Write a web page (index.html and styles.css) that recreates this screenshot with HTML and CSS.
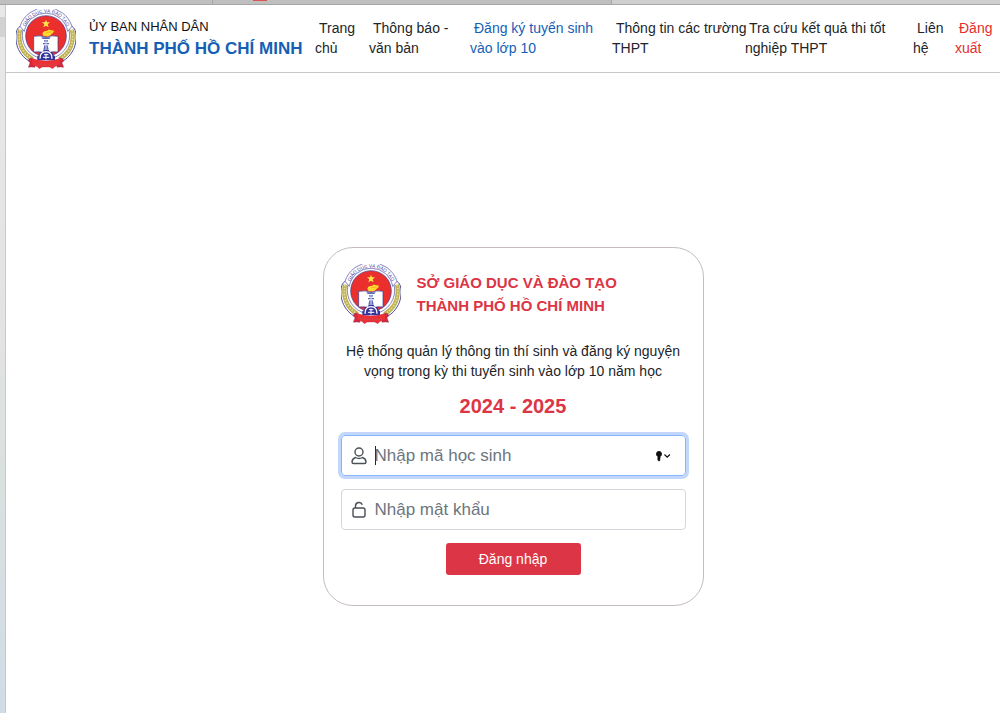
FILE: index.html
```html
<!DOCTYPE html>
<html lang="vi">
<head>
    <meta charset="UTF-8">
    <meta name="viewport" content="width=device-width, initial-scale=1.0">
    <title>Đăng ký tuyển sinh vào lớp 10</title>
    <link rel="stylesheet" href="styles.css">
</head>
<body>

    <div class="tab-strip"><span class="tab"></span><span class="tab tab-marked"></span><span class="tab tab-light"></span></div>

    <div class="window">
        <div class="side-strip"></div>
        <div class="page">
            <header class="header">
                <a class="brand" href="#">
                    <!-- Logo gốc, form bên dưới dùng lại bằng <use> -->
                    <svg class="emblem" viewBox="0 0 180 180" role="img" aria-label="Logo">
                        <g id="emblem">
                            <path d="M22 52 C-6 46 -4 100 8 122 C18 142 34 156 50 160 L130 160 C146 156 162 142 172 122 C184 100 186 46 158 52 Z" fill="#fff" stroke="#4a4aa0" stroke-width="3"/>
                            <path d="M12 62 C4 100 18 132 50 151M168 62 C176 100 162 132 130 151" fill="none" stroke="#bdb04c" stroke-width="13"/>
                            <path d="M12 62 C4 100 18 132 50 151M168 62 C176 100 162 132 130 151" fill="none" stroke="#e6dea0" stroke-width="5" stroke-dasharray="5 4"/>
                            <circle cx="90" cy="79" r="71" fill="#fff" stroke="#4a4aa0" stroke-width="2"/>
                            <path d="M12 52 A82 82 0 0 1 168 52 L155 67 A66 66 0 0 0 25 67 Z" fill="#fff" stroke="#4a4aa0" stroke-width="2"/>
                            <circle cx="90" cy="81" r="61" fill="#ea2f2c" stroke="#3b3b98" stroke-width="2"/>
                            <path id="emblem-arc" d="M24 66 A67 67 0 0 1 156 66" fill="none"/>
                            <text class="emblem-text"><textPath href="#emblem-arc" startOffset="50%">GIÁO DỤC VÀ ĐÀO TẠO</textPath></text>
                            <path d="M90 32l3 8h9l-7 6 3 9-8-5-8 5 3-9-7-6h9z" fill="#ffe74a"/>
                            <path d="M53 82q20-4 37 3q17-7 36-3v47q-19-3-36 4q-17-7-37-4z" fill="#fff" stroke="#35358f" stroke-width="2"/>
                            <path d="M82 80c-6-7 0-14 8-14c5 0 7-3 9-5c2 4 12 2 17 6c-5 0-7 3-3 5c-5-1-7 6-13 8c-6 3-12 2-18 0z" fill="#ffdb2e"/>
                            <path d="M91 72c5-3 10-3 16-3" fill="none" stroke="#f28c28" stroke-width="2"/>
                            <path d="M76 85h28l-4 5H80zM84 93h12l-2 7H86zM81 102h18v4H81zM85 109h10l3 13H82z" fill="#5c68b5"/>
                            <path d="M90 91v30" stroke="#dfe3fa" stroke-width="3"/>
                            <path d="M64 154v-13l6-3 1-9 8 1 4-7h15l4 7 8-1 1 9 6 3v13z" fill="#34349a"/>
                            <path d="M72 149c0-17 10-21 18-21s18 4 18 21" fill="none" stroke="#fff" stroke-width="4"/>
                            <path d="M84 137h13M81 145h19M90 134v17" stroke="#fff" stroke-width="3"/>
                            <path d="M47 147q-10 0-10 9l5 5-5 14q10-2 20 0l2-15zM133 147q10 0 10 9l-5 5 5 14q-10-2-20 0l-2-15z" fill="#d92a35" stroke="#6c2663"/>
                            <path d="M47 148q20 8 43 8t43-8v20q-11 1-17 5l-6 6-9-5H79l-9 5-6-6q-6-4-17-5z" fill="#ed3036" stroke="#a22d51"/>
                            <path d="M58 164q32 7 64 0" fill="none" stroke="#c45050" stroke-width="3" stroke-dasharray="4 2"/>
                        </g>
                    </svg>
                    <span class="brand-text">
                        <span class="brand-top">ỦY BAN NHÂN DÂN</span>
                        <strong class="brand-name">THÀNH PHỐ HỒ CHÍ MINH</strong>
                    </span>
                </a>
                <nav class="menu">
                    <a href="#">Trang<br>chủ</a>
                    <a href="#">Thông báo -<br>văn bản</a>
                    <a class="active" href="#">Đăng ký tuyển sinh<br>vào lớp 10</a>
                    <a href="#">Thông tin các trường<br>THPT</a>
                    <a href="#">Tra cứu kết quả thi tốt<br>nghiệp THPT</a>
                    <a href="#">Liên<br>hệ</a>
                    <a class="logout" href="#">Đăng<br>xuất</a>
                </nav>
            </header>

            <main class="main">
                <form class="login-card">
                    <div class="card-head">
                        <svg class="emblem" viewBox="0 0 180 180" role="img" aria-label="Logo"><use href="#emblem"/></svg>
                        <h1>SỞ GIÁO DỤC VÀ ĐÀO TẠO<br>THÀNH PHỐ HỒ CHÍ MINH</h1>
                    </div>
                    <p class="intro">Hệ thống quản lý thông tin thí sinh và đăng ký nguyện vọng trong kỳ thi tuyển sinh vào lớp 10 năm học</p>
                    <h2>2024 - 2025</h2>

                    <div class="field focused">
                        <label for="studentCode" aria-label="Mã học sinh">
                            <svg class="icon" viewBox="0 0 16 18"><circle cx="8" cy="5" r="4"/><path d="M4.500 10.500C2.300 11.400 1 13 1 15c0 1 .6 1.500 1.500 1.500h11c.9 0 1.500-.5 1.500-1.500 0-2-1.300-3.600-3.500-4.500-2 1.200-5 1.200-7 0z"/></svg>
                        </label>
                        <span class="caret"></span>
                        <input type="text" id="studentCode" placeholder="Nhập mã học sinh">
                        <svg class="key" viewBox="0 0 16 12"><path d="M4 1a3 3 0 0 0-1.500 5.600V10L4 11.500 5.500 10 4.800 9l.7-.8V6.600A3 3 0 0 0 4 1z"/><path class="chevron" d="M9.500 4.500l2.700 2.700 2.700-2.700"/></svg>
                    </div>
                    <div class="field">
                        <label for="password" aria-label="Mật khẩu">
                            <svg class="icon" viewBox="0 0 16 18"><rect x="2" y="7" width="12" height="9" rx="2"/><path d="M4.500 7V5a3.500 3.500 0 0 1 6.800-1.200"/></svg>
                        </label>
                        <input type="password" id="password" placeholder="Nhập mật khẩu">
                    </div>

                    <button class="login-btn" type="submit">Đăng nhập</button>
                </form>
            </main>
        </div>
    </div>

</body>
</html>
```
FILE: styles.css
```css
* {
    box-sizing: border-box;
}
body {
    margin: 0;
    min-height: 100vh;
    display: flex;
    flex-direction: column;
    font-family: "Liberation Sans", Arial, sans-serif;
    font-size: 14px;
    line-height: 20px;
    color: #212529;
    background-color: #fff;
    overflow-x: hidden;
}
a {
    color: inherit;
    text-decoration: none;
}
.tab-strip {
    display: flex;
    height: 5px;
    background-color: #bfbfbf;
    border-bottom: 1px solid #a6a6a6;
}
.tab {
    flex: 212;
    border-right: 1px solid #a6a6a6;
}
.tab-marked {
    flex: 399;
    background: linear-gradient(#d9534f, #d9534f) 40px 0 / 14px 1px no-repeat;
}
.tab-light {
    flex: 389;
    background-color: #cfcfcf;
    border-right: none;
}
.window {
    flex: 1;
    display: flex;
}
.side-strip {
    width: 6px;
    border-right: 1px solid #c9c9c9;
    background: linear-gradient(#e8e8e8 0 12px, #d2d2d0 12px 32px, #e8e8e8 32px, #e3e3e3 45%, #d8e0e0 70%, #d0dce6);
}
.page {
    flex: 1;
    min-width: 0;
}

/* Header */
.header {
    display: flex;
    align-items: center;
    height: 68px;
    padding-left: 10px;
    border-bottom: 1px solid #c8c8c8;
}
.brand {
    flex: none;
    width: 299px;
    display: flex;
    align-items: center;
    gap: 13px;
}
.emblem {
    flex: none;
    width: 60px;
    height: 60px;
}
.emblem-text {
    font-size: 14px;
    fill: #3b3b98;
    text-anchor: middle;
}
.brand-text {
    display: flex;
    flex-direction: column;
    padding-bottom: 2px;
    white-space: nowrap;
    line-height: 22px;
}
.brand-top {
    font-size: 13px;
    color: #111;
}
.brand-name {
    font-size: 17px;
    color: #1560b5;
}
.menu {
    flex: 1;
    display: grid;
    grid-template-columns: 54fr 101fr 142fr 133fr 168fr 42fr 45fr;
    padding-bottom: 2px;
}
.menu a {
    min-width: 0;
    white-space: nowrap;
    text-indent: 4px;
}
.menu .active {
    color: #1560b5;
}
.menu .logout {
    color: #e52d2d;
}

/* Login */
.main {
    display: flex;
    justify-content: center;
    padding: 174px 0 40px 20px;
}
.login-card {
    width: 381px;
    padding: 16px 17px 30px;
    border: 1px solid #c4bcbf;
    border-radius: 30px;
}
.card-head {
    display: flex;
    align-items: center;
    gap: 16px;
}
h1 {
    margin: 0;
    font-size: 15px;
    line-height: 23px;
    color: #dc3545;
}
.intro {
    margin: 17px 0 13px;
    text-align: center;
}
h2 {
    margin: 0 0 17px;
    font-size: 20px;
    line-height: 24px;
    text-align: center;
    color: #dc3545;
}
.field {
    display: flex;
    align-items: center;
    height: 41px;
    margin-bottom: 13px;
    padding: 0 14px 0 9px;
    border: 1px solid #d3d7db;
    border-radius: 4px;
}
.focused {
    border-color: #86b7fe;
    box-shadow: 0 0 0 3px #c3d7fc;
}
.field label {
    display: flex;
    margin-right: 8px;
}
.icon {
    width: 16px;
    height: 18px;
    fill: none;
    stroke: #495057;
    stroke-width: 1.4;
}
.caret {
    width: 1px;
    height: 19px;
    margin-right: -1px;
    background-color: #212529;
}
.field input {
    flex: 1;
    min-width: 0;
    padding: 0;
    border: none;
    outline: none;
    background: none;
    font-family: inherit;
    font-size: 17px;
    color: #212529;
}
.field input::placeholder {
    color: #6c757d;
    opacity: 1;
}
.key {
    width: 16px;
    height: 12px;
    fill: #111;
}
.chevron {
    fill: none;
    stroke: #111;
    stroke-width: 1.2;
}
.login-btn {
    display: block;
    width: 135px;
    height: 32px;
    margin: 0 auto;
    border: none;
    border-radius: 3px;
    background-color: #dc3545;
    color: #fff;
    font-family: inherit;
    font-size: 14px;
    cursor: pointer;
}
```
